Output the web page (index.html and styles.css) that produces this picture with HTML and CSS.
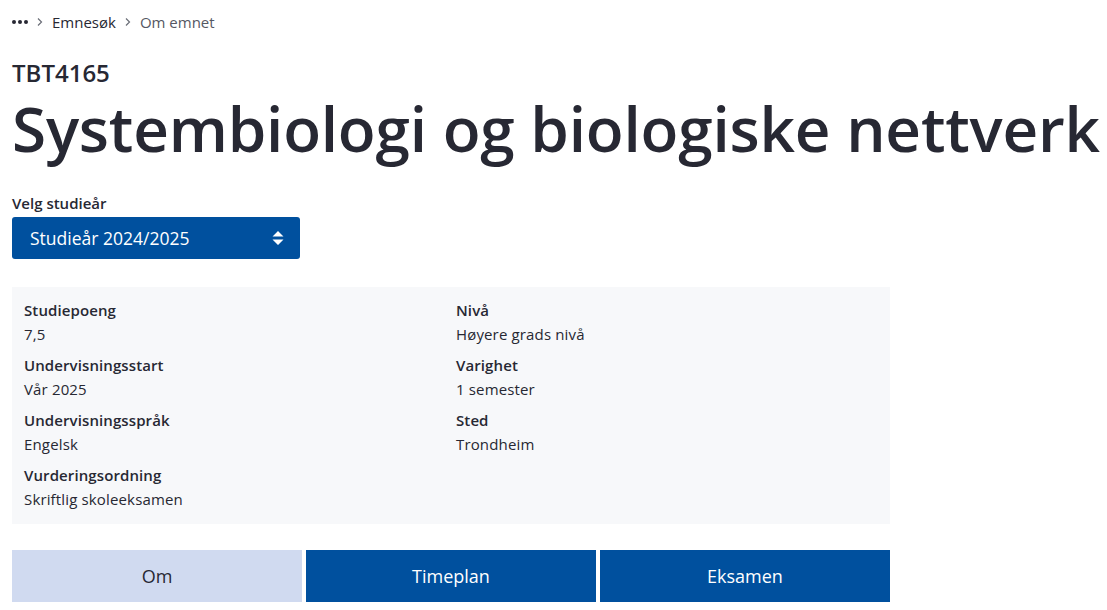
FILE: index.html
```html
<!DOCTYPE html>
<html lang="no">
<head>
<meta charset="utf-8">
<title>TBT4165 Systembiologi og biologiske nettverk</title>
<link rel="stylesheet" href="styles.css">
</head>
<body>
<div class="page">
  <nav class="crumbs">
    <span class="dots" aria-label="Mer"><i></i><i></i><i></i></span>
    <svg class="chev" width="8" height="10" viewBox="0 0 8 10"><path d="M2 1.5 L5.5 5 L2 8.5" fill="none" stroke="#6b6e78" stroke-width="1.2"/></svg>
    <a class="crumb">Emnesøk</a>
    <svg class="chev" width="8" height="10" viewBox="0 0 8 10"><path d="M2 1.5 L5.5 5 L2 8.5" fill="none" stroke="#6b6e78" stroke-width="1.2"/></svg>
    <span class="crumb current">Om emnet</span>
  </nav>

  <div class="code">TBT4165</div>
  <h1 class="title">Systembiologi og biologiske nettverk</h1>

  <div class="year">
    <label class="year-label">Velg studieår</label>
    <div class="select">
      <span>Studieår 2024/2025</span>
      <svg width="12" height="16" viewBox="0 0 12 16"><path d="M6 1 L11.5 6.5 H0.5 Z M6 15 L0.5 9.5 H11.5 Z" fill="#fff"/></svg>
    </div>
  </div>

  <div class="facts">
    <div class="fact"><div class="k">Studiepoeng</div><div class="v">7,5</div></div>
    <div class="fact"><div class="k">Nivå</div><div class="v">Høyere grads nivå</div></div>
    <div class="fact"><div class="k">Undervisningsstart</div><div class="v">Vår 2025</div></div>
    <div class="fact"><div class="k">Varighet</div><div class="v">1 semester</div></div>
    <div class="fact"><div class="k">Undervisningsspråk</div><div class="v">Engelsk</div></div>
    <div class="fact"><div class="k">Sted</div><div class="v">Trondheim</div></div>
    <div class="fact"><div class="k">Vurderingsordning</div><div class="v">Skriftlig skoleeksamen</div></div>
  </div>

  <div class="tabs">
    <div class="tab active">Om</div>
    <div class="tab">Timeplan</div>
    <div class="tab">Eksamen</div>
  </div>
</div>
</body>
</html>
```
FILE: styles.css
```css
* { box-sizing: border-box; }
html, body { margin: 0; padding: 0; background: #fff; }
body {
  font-family: "Open Sans", "Noto Sans", sans-serif;
  color: #272833;
}
.page { padding: 12px 12px 0 12px; }

.crumbs {
  display: flex;
  align-items: center;
  height: 20px;
  font-size: 15px;
}
.dots { display: flex; gap: 2px; width: 16px; align-items: center; }
.dots i { display: block; width: 4px; height: 4px; border-radius: 50%; background: #272833; }
.chev { margin: 0 8px 0 8px; }
.crumb { color: #272833; }
.crumb.current { color: #555863; }

.code {
  margin-top: 27px;
  font-size: 24px;
  font-weight: 600;
  line-height: 28px;
}
.title {
  margin: 3px 0 0 0;
  font-size: 62px;
  font-weight: 600;
  line-height: 76px;
  letter-spacing: -0.2px;
  white-space: nowrap;
}

.year { margin-top: 27px; }
.year-label {
  display: block;
  font-size: 15px;
  font-weight: 600;
  line-height: 20px;
}
.select {
  margin-top: 4px;
  width: 288px;
  height: 42px;
  background: #00509e;
  border-radius: 3px;
  color: #fff;
  font-size: 17.5px;
  display: flex;
  align-items: center;
  justify-content: space-between;
  padding: 0 16px 0 18px;
}

.facts {
  margin-top: 28px;
  width: 878px;
  background: #f7f8fa;
  padding: 12px 12px 13px 12px;
  display: grid;
  grid-template-columns: 432px 1fr;
  row-gap: 8px;
}
.fact .k { font-size: 15px; font-weight: 600; line-height: 23px; letter-spacing: 0.1px; }
.fact .v { font-size: 15px; line-height: 24px; letter-spacing: 0.15px; }

.tabs {
  margin-top: 26px;
  width: 878px;
  display: grid;
  grid-template-columns: 1fr 1fr 1fr;
  gap: 4px;
}
.tab {
  height: 52px;
  display: flex;
  align-items: center;
  justify-content: center;
  background: #00509e;
  color: #fff;
  font-size: 18px;
}
.tab.active { background: #d0daf0; color: #272833; }
```
